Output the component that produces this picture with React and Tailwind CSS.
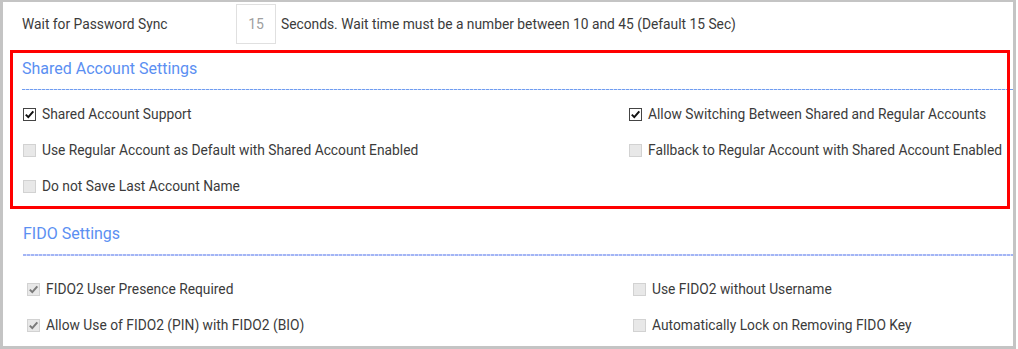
import React from "react";

function Box({ checked, disabled }) {
  const cls = disabled
    ? "bg-[#e8e8e8] border-[#d2d2d2]"
    : checked
    ? "bg-white border-[#444]"
    : "bg-white border-[#888]";
  return (
    <span className={`w-[13px] h-[13px] shrink-0 border flex items-center justify-center ${cls}`}>
      {checked && (
        <svg width="11" height="11" viewBox="0 0 11 11">
          <path
            d="M1.8 5.6 L4.3 8.1 L9.3 2.4"
            fill="none"
            stroke={disabled ? "#7a7a7a" : "#111"}
            strokeWidth="2"
          />
        </svg>
      )}
    </span>
  );
}

function Check({ label, checked, disabled }) {
  return (
    <div className="h-[36px] flex items-center gap-[6px]">
      <Box checked={checked} disabled={disabled} />
      <span className="text-[13.8px] text-[#3b3b3b] whitespace-nowrap">{label}</span>
    </div>
  );
}

export default function App() {
  const shared = [
    ["Shared Account Support", true, false],
    ["Allow Switching Between Shared and Regular Accounts", true, false],
    ["Use Regular Account as Default with Shared Account Enabled", false, true],
    ["Fallback to Regular Account with Shared Account Enabled", false, true],
    ["Do not Save Last Account Name", false, true],
  ];
  const fido = [
    ["FIDO2 User Presence Required", true, true],
    ["Use FIDO2 without Username", false, true],
    ["Allow Use of FIDO2 (PIN) with FIDO2 (BIO)", true, true],
    ["Automatically Lock on Removing FIDO Key", false, true],
  ];

  return (
    <div className="w-[1018px] h-[349px] bg-white font-['Roboto',sans-serif]">
      <div className="relative w-[1016px] h-[349px] border-l-[3px] border-t-2 border-r-[3px] border-b-[3px] border-[#c4c4c4] overflow-hidden">
        {/* wait row */}
        <div className="flex items-center h-[40px] mt-[2px] pl-[19px]">
          <span className="w-[214px] text-[13.8px] text-[#3b3b3b]">Wait for Password Sync</span>
          <div className="w-[40px] h-[40px] border border-[#e0e0e0] flex items-center justify-center text-[14px] text-[#a0a0a0]">
            15
          </div>
          <span className="ml-[5px] text-[13.8px] text-[#3b3b3b]">
            Seconds. Wait time must be a number between 10 and 45 (Default 15 Sec)
          </span>
        </div>

        {/* shared account */}
        <div className="pl-[19px]">
          <h3 className="mt-[13px] h-[24px] leading-[24px] text-[16px] text-[#5b8ff2]">Shared Account Settings</h3>
          <div className="mt-[8px] h-px bg-[repeating-linear-gradient(90deg,#6f9cf0_0_3px,#c9d9fa_3px_4px)]" />
          <div className="mt-[6px] grid grid-cols-[606px_1fr] pl-[1px]">
            {shared.map(([l, c, d]) => (
              <Check key={l} label={l} checked={c} disabled={d} />
            ))}
          </div>
        </div>

        {/* fido */}
        <div className="pl-[20px]">
          <h3 className="mt-[18px] h-[24px] leading-[24px] text-[16px] text-[#5b8ff2]">FIDO Settings</h3>
          <div className="mt-[8px] h-[2px] bg-[repeating-linear-gradient(90deg,#a3b5f5_0_3px,#d6defb_3px_4px)]" />
          <div className="mt-[15px] grid grid-cols-[606px_1fr] pl-[4px]">
            {fido.map(([l, c, d]) => (
              <Check key={l} label={l} checked={c} disabled={d} />
            ))}
          </div>
        </div>

        {/* annotation */}
        <div className="absolute left-[7px] top-[48px] w-[1000px] h-[159px] border-[3px] border-[#ff0000] pointer-events-none" />
      </div>
    </div>
  );
}
